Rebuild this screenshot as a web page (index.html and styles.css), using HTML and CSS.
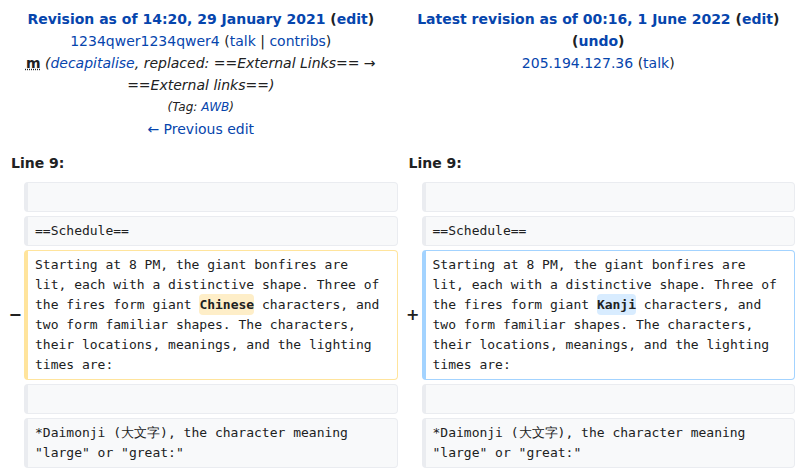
FILE: index.html
```html
<!DOCTYPE html>
<html lang="en">
<head>
<meta charset="utf-8">
<title>Diff</title>
<link rel="stylesheet" href="styles.css">
</head>
<body>
<table class="diff">
  <colgroup>
    <col class="col-marker"><col class="col-content"><col class="col-marker"><col class="col-content">
  </colgroup>
  <tr class="diff-title">
    <td colspan="2" class="diff-otitle">
      <div class="title"><a href="#">Revision as of 14:20, 29 January 2021</a> <span class="paren">(<a href="#">edit</a>)</span></div>
      <div><a href="#">1234qwer1234qwer4</a> <span class="paren">(<a href="#">talk</a> | <a href="#">contribs</a>)</span></div>
      <div class="summary"><abbr class="minor" title="This is a minor edit">m</abbr> <span class="comment">(<a href="#">decapitalise</a>, replaced: ==External Links== → ==External links==)</span></div>
      <div class="tags">(Tag: <a href="#">AWB</a>)</div>
      <div><a href="#">← Previous edit</a></div>
    </td>
    <td colspan="2" class="diff-ntitle">
      <div class="title"><a href="#">Latest revision as of 00:16, 1 June 2022</a> <span class="paren">(<a href="#">edit</a>)</span> <span class="paren">(<a href="#">undo</a>)</span></div>
      <div><a href="#">205.194.127.36</a> <span class="paren">(<a href="#">talk</a>)</span></div>
    </td>
  </tr>
  <tr>
    <td colspan="2" class="diff-lineno">Line 9:</td>
    <td colspan="2" class="diff-lineno">Line 9:</td>
  </tr>
  <tr>
    <td class="diff-marker"></td>
    <td class="diff-context"><div><br></div></td>
    <td class="diff-marker"></td>
    <td class="diff-context"><div><br></div></td>
  </tr>
  <tr>
    <td class="diff-marker"></td>
    <td class="diff-context"><div>==Schedule==</div></td>
    <td class="diff-marker"></td>
    <td class="diff-context"><div>==Schedule==</div></td>
  </tr>
  <tr>
    <td class="diff-marker"><span class="sign">−</span></td>
    <td class="diff-deletedline"><div>Starting at 8 PM, the giant bonfires are lit, each with a distinctive shape. Three of the fires form giant <del class="diffchange">Chinese</del> characters, and two form familiar shapes. The characters, their locations, meanings, and the lighting times are:</div></td>
    <td class="diff-marker"><span class="sign">+</span></td>
    <td class="diff-addedline"><div>Starting at 8 PM, the giant bonfires are lit, each with a distinctive shape. Three of the fires form giant <ins class="diffchange">Kanji</ins> characters, and two form familiar shapes. The characters, their locations, meanings, and the lighting times are:</div></td>
  </tr>
  <tr>
    <td class="diff-marker"></td>
    <td class="diff-context"><div><br></div></td>
    <td class="diff-marker"></td>
    <td class="diff-context"><div><br></div></td>
  </tr>
  <tr>
    <td class="diff-marker"></td>
    <td class="diff-context"><div>*Daimonji (大文字), the character meaning "large" or "great:"</div></td>
    <td class="diff-marker"></td>
    <td class="diff-context"><div>*Daimonji (大文字), the character meaning "large" or "great:"</div></td>
  </tr>
</table>
</body>
</html>
```
FILE: styles.css
```css
html, body {
  margin: 0;
  padding: 0;
  background: #ffffff;
}
body {
  font-family: "DejaVu Sans", sans-serif;
  font-size: 14px;
  color: #202122;
}
a {
  color: #0645ad;
  text-decoration: none;
}
table.diff {
  width: 799px;
  table-layout: fixed;
  border-collapse: separate;
  border-spacing: 4px;
  background: #fff;
}
col.col-marker { width: 16px; }
col.col-content { width: auto; }
td.diff-otitle, td.diff-ntitle {
  text-align: center;
  vertical-align: top;
  line-height: 22px;
  padding: 4px 0 0 0;
}
.title {
  font-weight: bold;
}
.paren { color: #202122; }
.minor {
  font-weight: bold;
  text-decoration: underline dotted;
  border: none;
  cursor: help;
}
.comment {
  font-style: italic;
}
.tags {
  font-style: italic;
  font-size: 12px;
}
td.diff-lineno {
  font-weight: bold;
  padding: 8px 7px 4px;
  line-height: 22px;
}
td.diff-marker {
  text-align: right;
  vertical-align: middle;
  font-weight: bold;
  font-size: 16px;
  line-height: 1.2;
  padding: 0;
  overflow: visible;
}
.sign {
  display: inline-block;
  margin-right: -2px;
}
td.diff-context, td.diff-addedline, td.diff-deletedline {
  font-family: "DejaVu Sans Mono", monospace;
  font-size: 13px;
  line-height: 20px;
  vertical-align: top;
  white-space: pre-wrap;
  word-wrap: break-word;
  border-style: solid;
  border-width: 1px 1px 1px 4px;
  border-radius: 4px;
  padding: 4px 0;
}
td.diff-context div, td.diff-addedline div, td.diff-deletedline div {
  padding: 0 14px 0 7px;
}
td.diff-context {
  background: #f8f9fa;
  border-color: #eaecf0;
  color: #202122;
}
td.diff-addedline {
  border-color: #a3d3ff;
}
td.diff-deletedline {
  border-color: #ffe49c;
}
.diffchange {
  font-weight: bold;
  text-decoration: none;
  border-radius: 4px;
  padding: 3px 0;
}
ins.diffchange { background: #d8ecff; }
del.diffchange { background: #feeec8; }
```
